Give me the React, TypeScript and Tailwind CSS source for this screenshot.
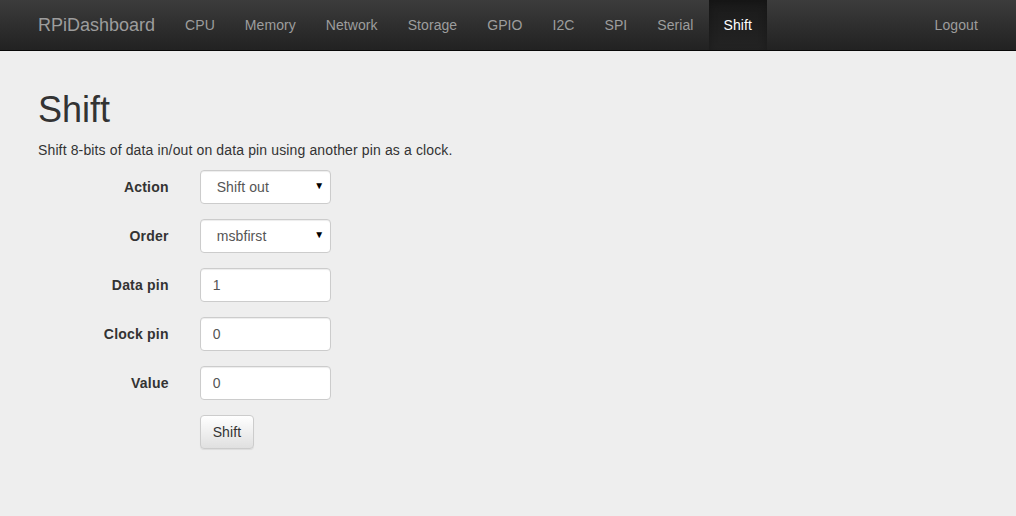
import React from "react";

const navItems = ["CPU", "Memory", "Network", "Storage", "GPIO", "I2C", "SPI", "Serial", "Shift"];

const font = "font-['Liberation_Sans',Arial,sans-serif]";

export default function App() {
  return (
    <div className={`min-h-[516px] bg-[#eeeeee] text-[14px] leading-[20px] tracking-[0.1px] text-[#333333] ${font}`}>
      {/* Navbar */}
      <nav className="h-[51px] border-b border-[#080808] bg-gradient-to-b from-[#3c3c3c] to-[#222222]">
        <div className="mx-auto flex w-[970px] px-[15px]">
          <a className="-ml-[15px] h-[50px] px-[15px] py-[15px] text-[18px] leading-[20px] tracking-normal text-[#9d9d9d]">
            RPiDashboard
          </a>
          <ul className="flex tracking-[0.07px]">
            {navItems.map((item) => (
              <li key={item}>
                <a
                  className={
                    item === "Shift"
                      ? "block bg-gradient-to-b from-[#1a1a1a] to-[#232323] px-[15px] py-[15px] text-white shadow-[inset_0_3px_9px_rgba(0,0,0,0.25)]"
                      : "block px-[15px] py-[15px] text-[#9d9d9d]"
                  }
                >
                  {item}
                </a>
              </li>
            ))}
          </ul>
          <ul className="-mr-[15px] ml-auto flex">
            <li>
              <a className="block px-[15px] py-[15px] text-[#9d9d9d]">Logout</a>
            </li>
          </ul>
        </div>
      </nav>

      {/* Content */}
      <div className="mx-auto w-[970px] px-[15px] pt-[20px]">
        <h1 className="mt-[19px] mb-[10px] text-[36px] leading-[39.6px] font-normal tracking-normal">Shift</h1>
        <p className="mb-[10px] tracking-[0.13px]">Shift 8-bits of data in/out on data pin using another pin as a clock.</p>

        <form className="-mx-[15px]">
          <Row label="Action">
            <Select value="out" options={[["out", "Shift out"], ["in", "Shift in"]]} />
          </Row>
          <Row label="Order">
            <Select value="msbfirst" options={[["msbfirst", "msbfirst"], ["lsbfirst", "lsbfirst"]]} />
          </Row>
          <Row label="Data pin">
            <TextInput value="1" />
          </Row>
          <Row label="Clock pin">
            <TextInput value="0" />
          </Row>
          <Row label="Value">
            <TextInput value="0" />
          </Row>
          <div className="flex">
            <div className="w-[161.67px]" />
            <div className="px-[15px]">
              <button
                type="button"
                className="h-[34px] rounded-[4px] border border-[#cccccc] bg-gradient-to-b from-white to-[#e0e0e0] px-[12px] py-[6px] text-[14px] leading-[20px] text-[#333333] shadow-[inset_0_1px_0_rgba(255,255,255,0.15),0_1px_1px_rgba(0,0,0,0.075)]"
              >
                Shift
              </button>
            </div>
          </div>
        </form>
      </div>
    </div>
  );
}

function Row({ label, children }: { label: string; children: React.ReactNode }) {
  return (
    <div className="mb-[15px] flex">
      <label className="w-[161.67px] pt-[7px] pr-[16px] pl-[15px] text-right font-bold tracking-[0.2px]">{label}</label>
      <div className="w-[161.67px] px-[15px]">{children}</div>
    </div>
  );
}

function Select({ value, options }: { value: string; options: [string, string][] }) {
  return (
    <div className="relative">
      <select
        defaultValue={value}
        className="h-[34px] w-full appearance-none rounded-[4px] border border-[#cccccc] bg-white py-[6px] pr-[24px] pl-[16px] text-[14px] text-[#555555] shadow-[inset_0_1px_1px_rgba(0,0,0,0.075)]"
      >
        {options.map(([v, text]) => (
          <option key={v} value={v}>
            {text}
          </option>
        ))}
      </select>
      <span className="pointer-events-none absolute top-[9px] right-[7px] text-[10px] leading-[14px] text-black">▼</span>
    </div>
  );
}

function TextInput({ value }: { value: string }) {
  return (
    <input
      type="text"
      defaultValue={value}
      className="h-[34px] w-full rounded-[4px] border border-[#cccccc] bg-white px-[12px] py-[6px] text-[14px] text-[#555555] shadow-[inset_0_1px_1px_rgba(0,0,0,0.075)]"
    />
  );
}
